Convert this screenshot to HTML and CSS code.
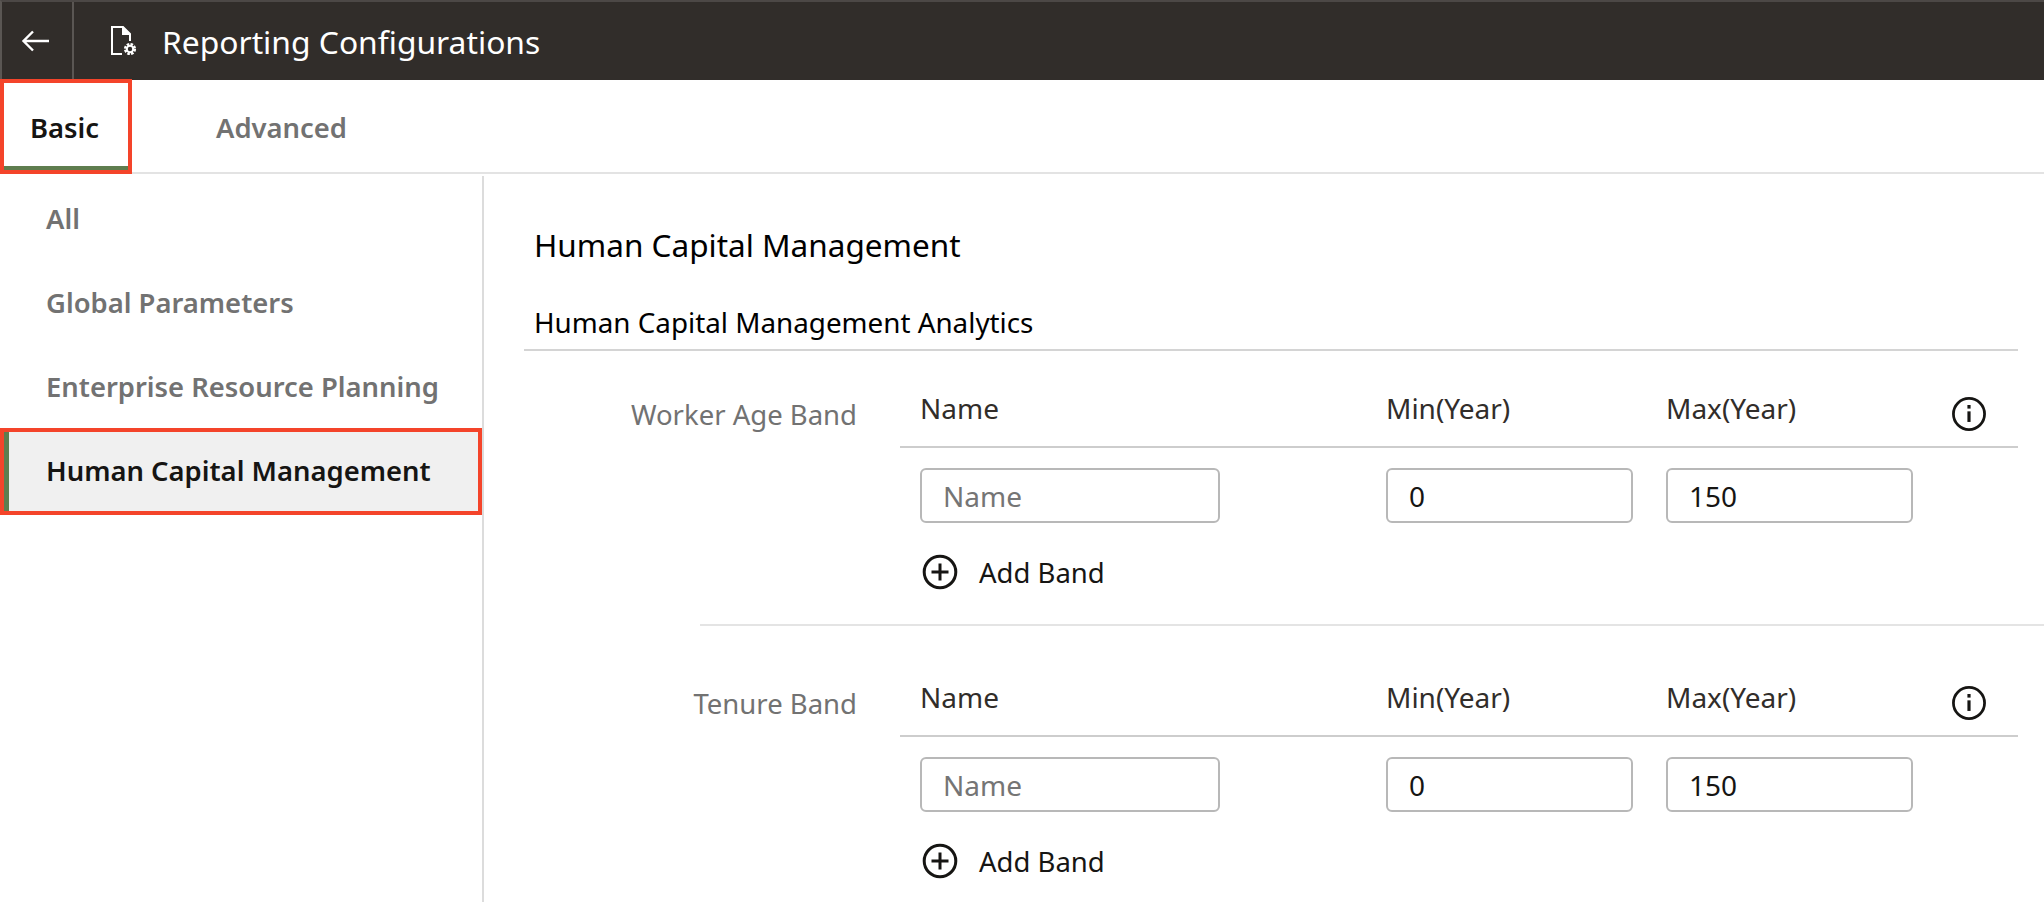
FILE: index.html
```html
<!DOCTYPE html>
<html lang="en">
<head>
    <meta charset="UTF-8">
    <meta name="viewport" content="width=device-width, initial-scale=1.0">
    <title>Reporting Configurations</title>
    <link rel="stylesheet" href="styles.css">
</head>
<body>
    <header class="topbar">
        <button class="back-btn" type="button" aria-label="Back">
            <svg width="30" height="24" viewBox="0 0 30 24" fill="none" stroke="#fff" stroke-width="2.4">
                <path d="M28 12H3M12 2.5L2.5 12l9.5 9.5"/>
            </svg>
        </button>
        <svg class="doc-icon" width="28" height="32" viewBox="0 0 28 32" fill="none" stroke="#fff" stroke-width="2">
            <path d="M12 29H2V2h11l7 7v7"/>
            <path d="M13 2v7h7" fill="#fff"/>
            <circle cx="20" cy="24" r="4.6" stroke-width="3" stroke-dasharray="2.4 1.2"/>
            <circle cx="20" cy="24" r="3.2" stroke-width="2"/>
        </svg>
        <span class="topbar-title">Reporting Configurations</span>
    </header>

    <nav class="tabs">
        <a class="tab tab-active"><span class="tab-inner">Basic</span></a>
        <a class="tab">Advanced</a>
    </nav>

    <div class="layout">
        <aside class="sidebar">
            <a class="side-item">All</a>
            <a class="side-item">Global Parameters</a>
            <a class="side-item">Enterprise Resource Planning</a>
            <a class="side-item side-active"><span class="side-inner">Human Capital Management</span></a>
        </aside>

        <main class="content">
            <h2 class="page-title">Human Capital Management</h2>
            <h3 class="sub-title">Human Capital Management Analytics</h3>

            <section class="band">
                <div class="band-label">Worker Age Band</div>
                <div class="band-table">
                    <div class="band-head">
                        <span>Name</span>
                        <span>Min(Year)</span>
                        <span>Max(Year)</span>
                        <svg class="info-icon" width="36" height="36" viewBox="0 0 34 34" fill="none" stroke="#161513" stroke-width="2.6">
                            <circle cx="17" cy="17" r="14.7"/>
                            <path d="M17 14.5v10" stroke-width="3"/>
                            <path d="M17 8.5v3.4" stroke-width="3"/>
                        </svg>
                    </div>
                    <div class="band-row">
                        <input class="field field-name" type="text" placeholder="Name">
                        <input class="field" type="text" value="0">
                        <input class="field" type="text" value="150">
                    </div>
                    <a class="add-band">
                        <svg width="36" height="36" viewBox="0 0 36 36" fill="none" stroke="#161513" stroke-width="3">
                            <circle cx="18" cy="18" r="15.8"/>
                            <path d="M18 9.5v17M9.5 18h17"/>
                        </svg>
                        Add Band
                    </a>
                </div>
            </section>

            <div class="band-divider"></div>

            <section class="band band-next">
                <div class="band-label">Tenure Band</div>
                <div class="band-table">
                    <div class="band-head">
                        <span>Name</span>
                        <span>Min(Year)</span>
                        <span>Max(Year)</span>
                        <svg class="info-icon" width="36" height="36" viewBox="0 0 34 34" fill="none" stroke="#161513" stroke-width="2.6">
                            <circle cx="17" cy="17" r="14.7"/>
                            <path d="M17 14.5v10" stroke-width="3"/>
                            <path d="M17 8.5v3.4" stroke-width="3"/>
                        </svg>
                    </div>
                    <div class="band-row">
                        <input class="field field-name" type="text" placeholder="Name">
                        <input class="field" type="text" value="0">
                        <input class="field" type="text" value="150">
                    </div>
                    <a class="add-band">
                        <svg width="36" height="36" viewBox="0 0 36 36" fill="none" stroke="#161513" stroke-width="3">
                            <circle cx="18" cy="18" r="15.8"/>
                            <path d="M18 9.5v17M9.5 18h17"/>
                        </svg>
                        Add Band
                    </a>
                </div>
            </section>
        </main>
    </div>
</body>
</html>
```

FILE: styles.css
```css
* {
    box-sizing: border-box;
}
html, body {
    height: 100%;
}
body {
    margin: 0;
    overflow: hidden;
    font-family: "Noto Sans", sans-serif;
    color: #161513;
    background-color: #fff;
}

/* top bar */
.topbar {
    display: flex;
    align-items: center;
    height: 80px;
    background-color: #312d2a;
    border-top: 2px solid #4c4846;
    border-left: 2px solid #5a5653;
}
.back-btn {
    display: flex;
    align-items: center;
    justify-content: center;
    width: 72px;
    height: 100%;
    padding: 0 3px 0 0;
    background: none;
    border: none;
    border-right: 2px solid #5a5653;
}
.doc-icon {
    margin-left: 36px;
}
.topbar-title {
    margin-left: 24px;
    font-size: 31.8px;
    color: #fff;
}

/* tabs */
.tabs {
    display: flex;
    height: 94px;
    border-bottom: 2px solid #e3e3e3;
}
.tab {
    display: flex;
    align-items: center;
    padding: 2px 0 0 84px;
    font-size: 27.4px;
    font-weight: 600;
    color: #727272;
}
.tab-active {
    width: 132px;
    height: 95px;
    margin-top: -1px;
    padding: 0;
    border: 4px solid #f4442a;
    color: #161513;
}
.tab-inner {
    flex: 1;
    height: 100%;
    padding-left: 26px;
    line-height: 90px;
    border-bottom: 4px solid #5f7d4f;
}

/* sidebar + content */
.layout {
    display: flex;
    height: 728px;
    margin-top: 2px;
}
.sidebar {
    flex: none;
    width: 484px;
    border-right: 2px solid #dcdcdc;
}
.side-item {
    display: block;
    height: 84px;
    padding-left: 46px;
    font-size: 27.4px;
    font-weight: 600;
    line-height: 86px;
    color: #727272;
}
.side-active {
    display: block;
    height: 87px;
    padding: 0;
    border: 4px solid #f4442a;
    background-color: #f0f0f0;
    color: #161513;
}
.side-inner {
    display: block;
    height: 100%;
    padding-left: 37px;
    line-height: 78px;
    border-left: 5px solid #5f7d4f;
}

.content {
    flex: 1;
    min-width: 0;
    padding: 49px 26px 0 40px;
}
.page-title {
    margin: 0 0 37px;
    padding-left: 10px;
    font-size: 31.5px;
    font-weight: 400;
    line-height: 40px;
    color: #000;
}
.sub-title {
    margin: 0;
    padding: 0 0 7px 10px;
    font-size: 27.8px;
    font-weight: 400;
    line-height: 40px;
    color: #000;
    border-bottom: 2px solid #d4d4d4;
}

/* band blocks */
.band {
    display: flex;
    gap: 43px;
    padding: 37px 0 34px;
}
.band-next {
    padding-top: 51px;
}
.band-label {
    flex: none;
    width: 333px;
    padding-top: 7px;
    font-size: 27.5px;
    line-height: 40px;
    text-align: right;
    color: #727272;
}
.band-table {
    flex: 1;
}
.band-head,
.band-row {
    display: grid;
    grid-template-columns: 466px 280px 285px 1fr;
    padding-left: 20px;
}
.band-head {
    align-items: center;
    padding-bottom: 18px;
    font-size: 28px;
    line-height: 40px;
    color: #312d2a;
    border-bottom: 2px solid #cdcdcd;
}
.info-icon {
    display: block;
    margin-top: 7px;
    margin-bottom: -5px;
}
.band-row {
    margin-top: 20px;
}
.field {
    width: 247px;
    height: 55px;
    padding: 0 21px;
    font-family: inherit;
    font-size: 28px;
    color: #161513;
    background-color: #fff;
    border: 2px solid #b8b8b8;
    border-radius: 6px;
}
.field-name {
    width: 300px;
}
.field::placeholder {
    color: #757575;
    opacity: 1;
}
.add-band {
    display: flex;
    align-items: center;
    gap: 21px;
    height: 36px;
    margin: 31px 0 0 22px;
    font-size: 27.5px;
    color: #161513;
}
.band-divider {
    margin: 0 -26px 0 176px;
    border-top: 2px solid #e4e4e4;
}
```
